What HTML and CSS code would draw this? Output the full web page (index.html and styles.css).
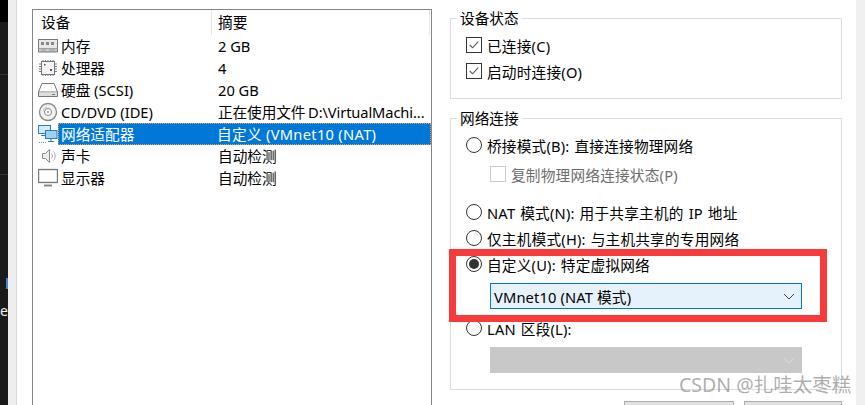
FILE: index.html
```html
<!DOCTYPE html>
<html lang="zh-CN">
<head>
<meta charset="utf-8">
<title>虚拟机设置</title>
<link rel="stylesheet" href="styles.css">
</head>
<body>
<div class="desktop">
  <aside class="editor"><div class="editor-top"></div><span class="editor-tick"></span><span class="editor-letter">e</span></aside>
  <div class="gutter"></div>
  <main class="dialog">
    <section class="devices">
      <div class="head"><div class="head-a">设备</div><div class="head-b">摘要</div></div>
      <div class="row"><svg class="ic" viewBox="0 0 20 16"><rect x="0.5" y="1.5" width="19" height="9" fill="#e8e8e8" stroke="#777"/><path d="M3 4h3v3H3zM8 4h3v3H8zM13 4h3v3h-3z" fill="#888"/><path d="M0.5 10.5v3.500h19v-3.500" fill="#ccc" stroke="#777"/><path d="M3 12h5M11 12h6" stroke="#999"/></svg><div class="name">内存</div><div class="sum">2 GB</div></div>
      <div class="row"><svg class="ic" viewBox="0 0 20 18"><rect x="3.500" y="2.500" width="13" height="13" fill="#f4f4f4" stroke="#777"/><path d="M5 1v1M7.500 1v1M10 1v1M12.500 1v1M15 1v1M5 16v1M7.500 16v1M10 16v1M12.500 16v1M15 16v1M1 5h2M1 7.500h2M1 10h2M1 12.500h2M17 5h2M17 7.500h2M17 10h2M17 12.500h2" stroke="#777"/><path d="M6 5h1.500v1.500H6zM12 10h2v2h-2z" fill="#555"/></svg><div class="name">处理器</div><div class="sum">4</div></div>
      <div class="row"><svg class="ic" viewBox="0 0 20 16"><path d="M4 1.500h12l3.500 8.500v4.500H.5V10z" fill="#fff" stroke="#777"/><path d="M.5 10h19" stroke="#777"/><rect x="1" y="10.500" width="18" height="3.500" fill="#ddd"/><path d="M14 12.500h3" stroke="#777"/></svg><div class="name">硬盘 (SCSI)</div><div class="sum">20 GB</div></div>
      <div class="row"><svg class="ic" viewBox="0 0 20 20"><circle cx="10" cy="10" r="8.500" fill="#f2f2f2" stroke="#888" stroke-width="1.300"/><circle cx="10" cy="10" r="3.500" fill="#fff" stroke="#888"/><circle cx="10" cy="10" r="1" fill="#888"/><path d="M5 9a5 5 0 0 1 4-4" fill="none" stroke="#bbb"/></svg><div class="name">CD/DVD (IDE)</div><div class="sum file">正在使用文件 D:\VirtualMachi...</div></div>
      <div class="row selected"><svg class="ic" viewBox="0 0 20 20"><rect x="0.500" y="1.500" width="12" height="8" fill="#d5e9f8" stroke="#2b7fc0"/><path d="M3 11.500h7" stroke="#2b7fc0"/><rect x="7.500" y="6.500" width="11.500" height="8" fill="#9fd0f2" stroke="#2b7fc0"/><path d="M13 15v2M10 17.500h6" stroke="#2b7fc0"/><path d="M1 18.500h7" stroke="#888" stroke-dasharray="1 1"/></svg><div class="sel-band"><div class="name">网络适配器</div><div class="sum">自定义 (VMnet10 (NAT)</div></div></div>
      <div class="row"><svg class="ic" viewBox="0 0 20 18"><path d="M4.500 6.500h3l4-4v13l-4-4h-3z" fill="#eee" stroke="#888"/><path d="M13.500 6.500c1.300 1.500 1.300 3.500 0 5M15.500 4.500c2.300 2.700 2.300 6.300 0 9" fill="none" stroke="#aaa"/></svg><div class="name">声卡</div><div class="sum">自动检测</div></div>
      <div class="row"><svg class="ic" viewBox="0 0 20 18"><rect x="0.500" y="0.500" width="19" height="13" fill="#f6f6f6" stroke="#777" stroke-width="1.300"/><rect x="2" y="2" width="16" height="10" fill="#fff"/><path d="M6 15.500h8v2H6z" fill="#888"/></svg><div class="name">显示器</div><div class="sum">自动检测</div></div>
    </section>

    <section class="panel">
      <div class="group group-status">
        <div class="legend">设备状态</div>
        <label class="opt"><span class="box"><svg viewBox="0 0 15 15"><path d="M3 7.500l3 3 6-6.500" fill="none" stroke="#555" stroke-width="1.200"/></svg></span>已连接(C)</label>
        <label class="opt"><span class="box"><svg viewBox="0 0 15 15"><path d="M3 7.500l3 3 6-6.500" fill="none" stroke="#555" stroke-width="1.200"/></svg></span>启动时连接(O)</label>
      </div>
      <div class="group group-net">
        <div class="legend">网络连接</div>
        <label class="opt"><span class="radio"></span>桥接模式(B): 直接连接物理网络</label>
        <label class="opt sub disabled"><span class="box off"></span>复制物理网络连接状态(P)</label>
        <label class="opt gap-nat"><span class="radio"></span>NAT 模式(N): 用于共享主机的 IP 地址</label>
        <label class="opt"><span class="radio"></span>仅主机模式(H): 与主机共享的专用网络</label>
        <label class="opt"><span class="radio on"></span>自定义(U): 特定虚拟网络</label>
        <div class="combo active">VMnet10 (NAT 模式)<svg viewBox="0 0 12 7"><path d="M1 1l5 5 5-5" fill="none" stroke="#444"/></svg></div>
        <label class="opt gap-lan"><span class="radio"></span>LAN 区段(L):</label>
        <div class="combo off"><svg viewBox="0 0 12 7"><path d="M1 1l5 5 5-5" fill="none" stroke="#dcdcdc"/></svg></div>
      </div>
      <div class="buttons"><span class="btn btn-a"></span><span class="btn btn-b"></span></div>
    </section>
  </main>
  <div class="gutter-right"></div>
</div>
<div class="redbox"></div>
<div class="mark">CSDN @扎哇太枣糕</div>
</body>
</html>
```
FILE: styles.css
```css
html, body { margin: 0; padding: 0; }
body {
  width: 865px; height: 405px; overflow: hidden; position: relative; background: #fff;
  font-family: "Noto Sans", "Noto Sans CJK SC", sans-serif; font-size: 14.67px; color: #000;
}
.desktop { display: flex; height: 405px; overflow: hidden; }
.editor {
  width: 8px; position: relative; flex: none; overflow: hidden;
  background: linear-gradient(#1a1a1a 74px, #333 74px, #333 75px, #1a1a1a 75px, #1a1a1a 174px, #333 174px, #333 175px, #1a1a1a 175px);
}
.editor-top { height: 22px; background: #000; }
.editor-tick { position: absolute; left: 6px; top: 278px; width: 2px; height: 11px; background: #4a88c0; }
.editor-letter { position: absolute; left: 0; top: 300px; color: #eee; font-size: 14px; line-height: 22px; }
.gutter { width: 8px; flex: none; background: #eeeeee; border-right: 1px solid #d9d9d9; }
.dialog { flex: 1; display: flex; padding: 9px 0 0 15px; min-width: 0; height: 396px; }
.gutter-right { width: 9px; flex: none; background: #f0f0f0; }

.devices { width: 398px; height: 395px; flex: none; border: 1px solid #84848c; border-bottom: 0; }
.head { display: flex; height: 25px; line-height: 25px; }
.head-a { width: 170px; padding-left: 8px; border-right: 1px solid #e5e5e5; }
.head-b { flex: 1; padding-left: 6px; border-right: 1px solid #e5e5e5; margin-right: 1px; }
.row { display: flex; align-items: center; height: 22px; line-height: 20px; white-space: nowrap; }
.ic { width: 20px; height: 20px; margin-left: 5px; flex: none; }
.name { width: 150px; padding-left: 3px; flex: none; margin-top: -1px; }
.sum { padding-left: 7px; margin-top: -1px; }
.sum.file { word-spacing: -1px; letter-spacing: -.1px; }
.sel-band { flex: 1; display: flex; height: 20px; line-height: 20px; background: #0078d7; color: #fff; border: 1px dotted #f0a040; }
.sel-band .name { width: 149px; padding-left: 2px; margin-top: 0; }
.sel-band .sum { padding-left: 7px; margin-top: 0; letter-spacing: .3px; }

.panel { margin-left: 18px; padding-top: 9px; width: 392px; flex: none; }
.group { border: 1px solid #dcdcdc; padding: 0 0 0 15px; box-sizing: border-box; width: 392px; }
.group-status { height: 81px; margin-bottom: 19px; }
.group-net { height: 272px; }
.legend { margin: -11px 0 -10px -9px; padding: 0 3px; width: fit-content; background: #fff; height: 20px; line-height: 20px; position: relative; }
.group .legend + .opt { margin-top: 14px; }
.opt { display: flex; align-items: center; height: 26px; white-space: nowrap; letter-spacing: .2px; word-spacing: 1px; }
.box { width: 14px; height: 14px; border: 1px solid #333; margin-right: 5px; flex: none; background: #fff; }
.box svg { display: block; width: 14px; height: 14px; }
.box.off { border-color: #ccc; }
.radio { width: 14px; height: 14px; border: 1px solid #333; border-radius: 50%; margin-right: 5px; flex: none; display: flex; align-items: center; justify-content: center; background: #fff; }
.radio.on::before { content: ""; width: 10px; height: 10px; border-radius: 50%; background: #333; }
.sub { margin: 3px 0 0 24px; }
.disabled { color: #6d6d6d; }
.gap-nat { margin-top: 12px; }
.gap-lan { margin-top: 6px; }
.combo { display: flex; align-items: center; justify-content: space-between; box-sizing: border-box; width: 312px; height: 26px; margin: 6px 0 0 24px; padding: 0 6px 0 3px; letter-spacing: .15px; }
.combo svg { width: 12px; height: 7px; margin-left: auto; }
.combo.active { border: 1px solid #0078d7; background: #e5f1fb; }
.combo.off { background: #c8c8c8; border: 1px solid #c8c8c8; }
.buttons { display: flex; justify-content: flex-end; gap: 10px; margin-top: 11px; height: 4px; overflow: hidden; }
.btn { height: 20px; box-sizing: border-box; border: 1px solid #adadad; background: #e1e1e1; }
.btn-a { width: 110px; }
.btn-b { width: 98px; }

.redbox { position: absolute; left: 449px; top: 249px; width: 364px; height: 59px; border: 7px solid #f93a3a; }
.mark { position: absolute; left: 679px; top: 371px; font-size: 19.5px; line-height: 28px; color: rgba(120,120,120,.6); white-space: nowrap; }
```
